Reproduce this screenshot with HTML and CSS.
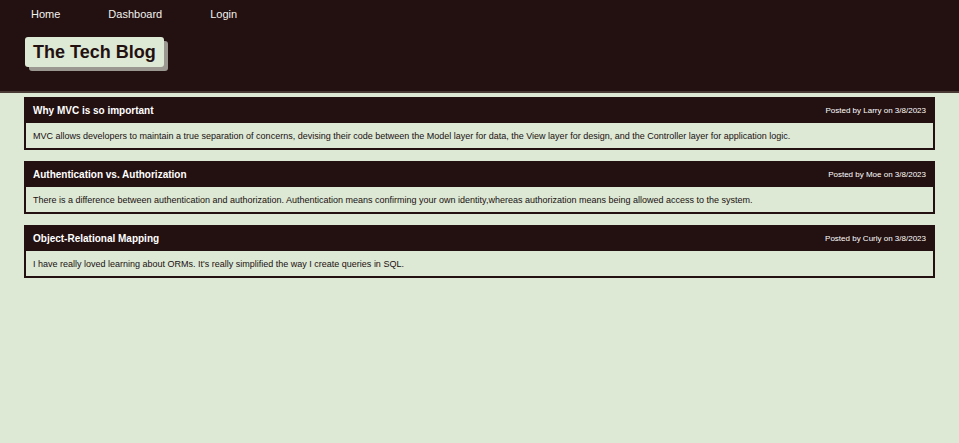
FILE: index.html
```html
<!DOCTYPE html>
<html>
<head>
<meta charset="utf-8">
<link rel="stylesheet" href="styles.css">
<title>The Tech Blog</title>
</head>
<body>
<header class="site-header">
  <nav class="nav">
    <a class="nav-link" href="#">Home</a>
    <a class="nav-link" href="#">Dashboard</a>
    <a class="nav-link" href="#">Login</a>
  </nav>
  <h1 class="brand">The Tech Blog</h1>
</header>
<main class="posts">
  <article class="post">
    <div class="post-head">
      <h2 class="post-title">Why MVC is so important</h2>
      <span class="post-meta">Posted by Larry on 3/8/2023</span>
    </div>
    <p class="post-body">MVC allows developers to maintain a true separation of concerns, devising their code between the Model layer for data, the View layer for design, and the Controller layer for application logic.</p>
  </article>
  <article class="post">
    <div class="post-head">
      <h2 class="post-title">Authentication vs. Authorization</h2>
      <span class="post-meta">Posted by Moe on 3/8/2023</span>
    </div>
    <p class="post-body">There is a difference between authentication and authorization. Authentication means confirming your own identity,whereas authorization means being allowed access to the system.</p>
  </article>
  <article class="post">
    <div class="post-head">
      <h2 class="post-title">Object-Relational Mapping</h2>
      <span class="post-meta">Posted by Curly on 3/8/2023</span>
    </div>
    <p class="post-body">I have really loved learning about ORMs. It's really simplified the way I create queries in SQL.</p>
  </article>
</main>
</body>
</html>
```
FILE: styles.css
```css
* { box-sizing: border-box; }
html, body { margin: 0; padding: 0; }
body {
  background: #dde8d5;
  font-family: "Liberation Sans", Arial, sans-serif;
  color: #1a1010;
  height: 443px;
}
.site-header {
  background: #231010;
  height: 93px;
  border-bottom: 2px solid #4a3a36;
  padding: 6px 25px 0;
}
.nav {
  display: flex;
  gap: 48px;
  padding-left: 6px;
}
.nav-link {
  color: #f2f2ee;
  text-decoration: none;
  font-size: 11px;
  line-height: 16px;
}
.brand {
  display: inline-block;
  white-space: nowrap;
  margin: 15px 0 0;
  background: #dde8d5;
  color: #231010;
  font-size: 18px;
  font-weight: bold;
  line-height: 22px;
  padding: 4px 8px 4px;
  border-radius: 3px;
  box-shadow: 4px 4px 0 #9a9890;
}
.posts {
  display: flex;
  flex-direction: column;
  gap: 11px;
  padding: 4px 24px 0;
}
.post {
  border: 2px solid #231010;
  border-top: 0;
}
.post-head {
  background: #231010;
  color: #ffffff;
  height: 26px;
  display: flex;
  align-items: center;
  justify-content: space-between;
  padding: 0 7px 0 7px;
}
.post-title {
  margin: 0;
  font-size: 10px;
  font-weight: bold;
}
.post-meta {
  font-size: 8px;
}
.post-body {
  margin: 0;
  font-size: 9px;
  line-height: 11px;
  padding: 8px 7px 6px;
  color: #1a1010;
}
```
